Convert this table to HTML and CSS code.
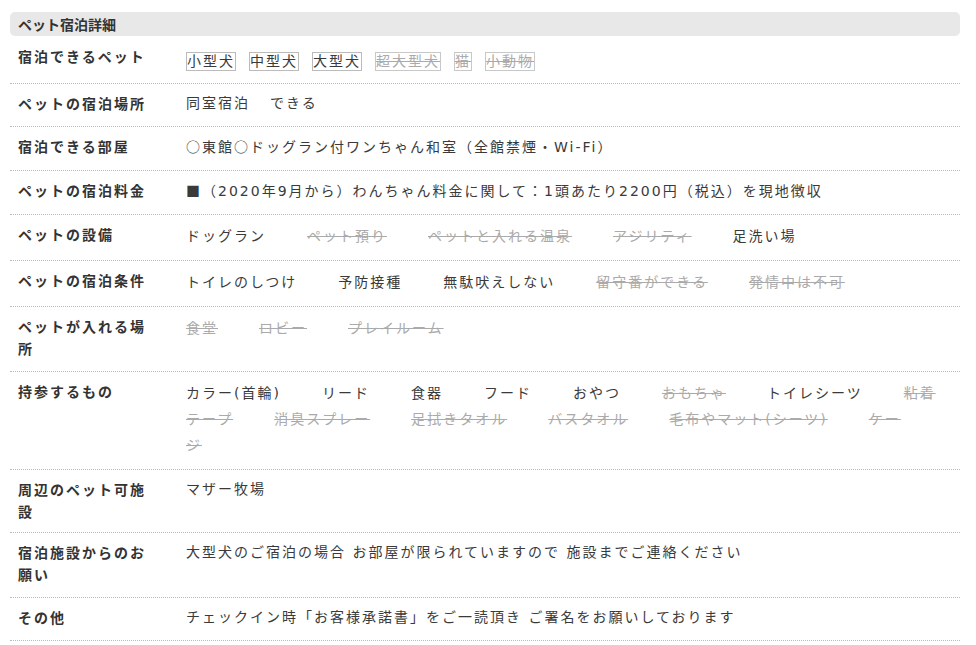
FILE: index.html
```html
<!DOCTYPE html>
<html lang="ja">
<head>
<meta charset="utf-8">
<title>ペット宿泊詳細</title>
<link rel="stylesheet" href="styles.css">
</head>
<body>
<section class="pet">
  <h2 class="pet__head">ペット宿泊詳細</h2>
  <dl class="pet__list">
    <div class="row row--tags">
      <dt>宿泊できるペット</dt>
      <dd class="tags"><span class="tag">小型犬</span><span class="tag">中型犬</span><span class="tag">大型犬</span><span class="tag off">超大型犬</span><span class="tag off">猫</span><span class="tag off">小動物</span></dd>
    </div>
    <div class="row">
      <dt>ペットの宿泊場所</dt>
      <dd><span class="lead">同室宿泊</span>できる</dd>
    </div>
    <div class="row">
      <dt>宿泊できる部屋</dt>
      <dd><span class="sym">○</span>東館<span class="sym">○</span>ドッグラン付ワンちゃん和室（全館禁煙・Wi-Fi）</dd>
    </div>
    <div class="row">
      <dt>ペットの宿泊料金</dt>
      <dd><span class="sym">■</span>（2020年9月から）わんちゃん料金に関して：1頭あたり2200円（税込）を現地徴収</dd>
    </div>
    <div class="row row--items">
      <dt>ペットの設備</dt>
      <dd class="items"><span class="item">ドッグラン</span><span class="item off">ペット預り</span><span class="item off">ペットと入れる温泉</span><span class="item off">アジリティ</span><span class="item">足洗い場</span></dd>
    </div>
    <div class="row row--items">
      <dt>ペットの宿泊条件</dt>
      <dd class="items"><span class="item">トイレのしつけ</span><span class="item">予防接種</span><span class="item">無駄吠えしない</span><span class="item off">留守番ができる</span><span class="item off">発情中は不可</span></dd>
    </div>
    <div class="row">
      <dt>ペットが入れる場所</dt>
      <dd class="items"><span class="item off">食堂</span><span class="item off">ロビー</span><span class="item off">プレイルーム</span></dd>
    </div>
    <div class="row row--items">
      <dt>持参するもの</dt>
      <dd class="items"><span class="item">カラー(首輪)</span><span class="item">リード</span><span class="item">食器</span><span class="item">フード</span><span class="item">おやつ</span><span class="item off">おもちゃ</span><span class="item">トイレシーツ</span><span class="item off">粘着テープ</span><span class="item off">消臭スプレー</span><span class="item off">足拭きタオル</span><span class="item off">バスタオル</span><span class="item off">毛布やマット(シーツ)</span><span class="item off">ケージ</span></dd>
    </div>
    <div class="row row--pair">
      <dt>周辺のペット可施設</dt>
      <dd>マザー牧場</dd>
    </div>
    <div class="row">
      <dt>宿泊施設からのお願い</dt>
      <dd>大型犬のご宿泊の場合 お部屋が限られていますので 施設までご連絡ください</dd>
    </div>
    <div class="row">
      <dt>その他</dt>
      <dd>チェックイン時「お客様承諾書」をご一読頂き ご署名をお願いしております</dd>
    </div>
  </dl>
</section>
</body>
</html>
```

FILE: styles.css
```css
html, body {
  margin: 0;
  padding: 0;
  background: #fff;
}

body {
  font-family: "Noto Sans CJK JP", "Noto Sans", sans-serif;
  color: #333;
}

.pet {
  width: 950px;
  padding: 12px 16px 0 10px;
}

.pet__head {
  margin: 0;
  height: 24px;
  line-height: 24px;
  padding-left: 8px;
  background: #e8e8e8;
  border-radius: 5px;
  font-size: 14px;
  font-weight: bold;
  color: #333;
}

.pet__list {
  margin: 0;
}

.row {
  display: grid;
  grid-template-columns: 176px 1fr;
  align-items: start;
  border-bottom: 1px dotted #bbb;
}

.row dt {
  padding: 8px 33px 12px 8px;
  font-size: 14px;
  font-weight: bold;
  letter-spacing: 2px;
  line-height: 22px;
  color: #333;
}

.row--tags dt {
  padding-top: 9px;
}

.row dd {
  margin: 0;
  padding: 8px 10px 12px 0;
  font-family: "DejaVu Sans", "Noto Sans CJK JP", sans-serif;
  font-size: 14px;
  letter-spacing: 2px;
  line-height: 22px;
  color: #3a3a3a;
}

.row--items dt {
  padding-bottom: 11px;
}

.row--items dd.items {
  padding-bottom: 11px;
}

.row--pair dt {
  padding-bottom: 10px;
}

.sym {
  font-family: "Noto Sans CJK JP", sans-serif;
}

.lead {
  margin-right: 20px;
}

.row dd.tags {
  display: flex;
  flex-wrap: wrap;
  padding-top: 16px;
  padding-bottom: 12px;
}

.tag {
  display: inline-block;
  border: 1px solid #bbb;
  line-height: 17px;
  margin-right: 13px;
}

.tag.off {
  border-color: #c8c8c8;
}

.row dd.items {
  line-height: 26px;
}

.item {
  margin-right: 41px;
}

.off {
  color: #aaa;
  text-decoration: line-through;
}
```
